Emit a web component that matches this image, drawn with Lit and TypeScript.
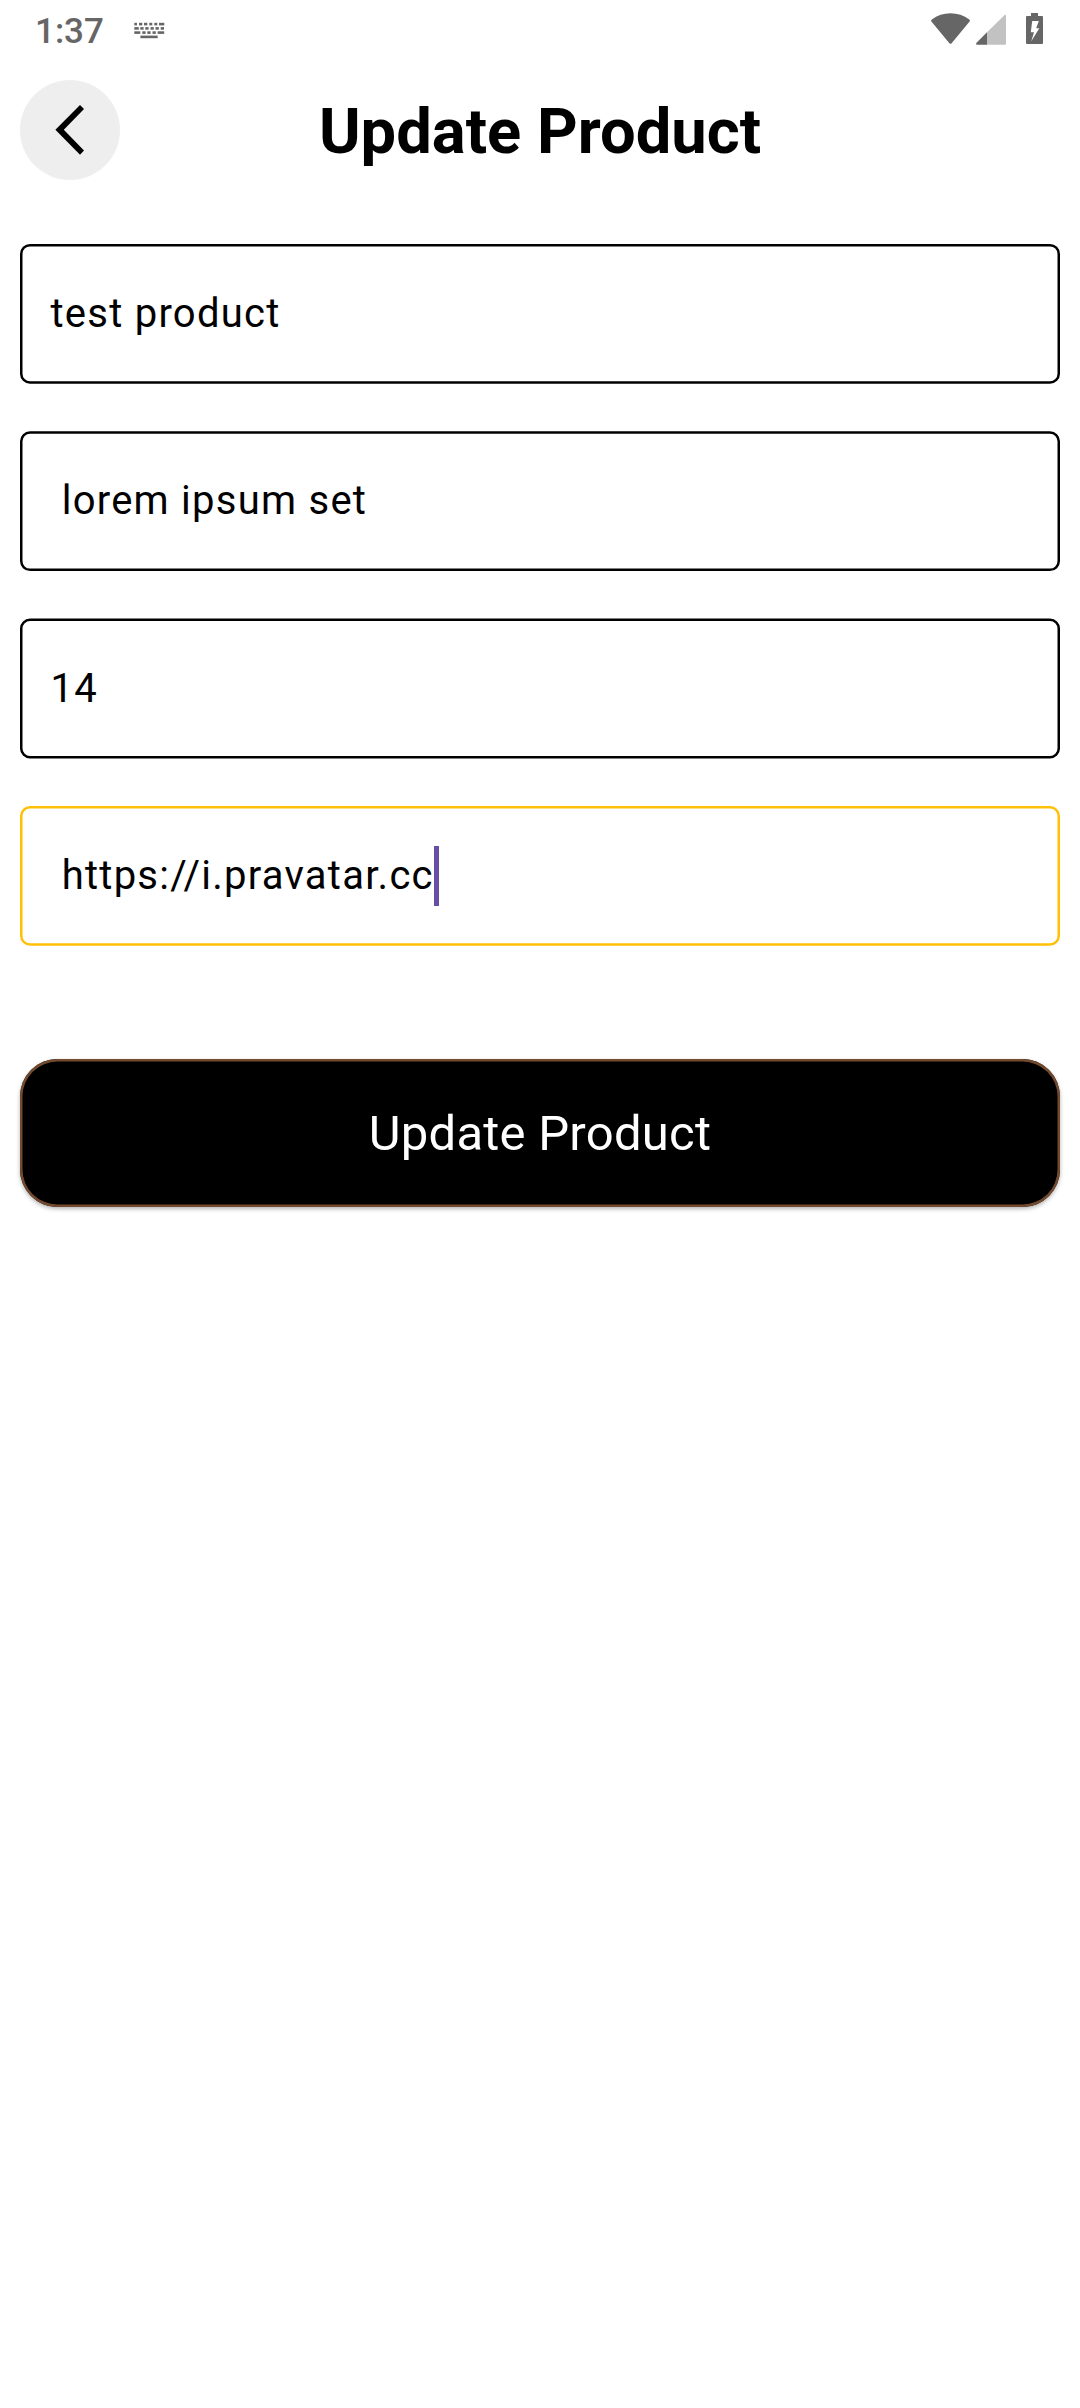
import { LitElement, html, css, svg } from "lit";
import { customElement, property } from "lit/decorators.js";

@customElement("status-bar")
class StatusBar extends LitElement {
  static styles = css`
    :host { display: flex; height: 60px; box-sizing: border-box; justify-content: space-between; color: #666; }
    .left { display: flex; padding-left: 35px; }
    .time { font: 500 35px/60px Roboto, sans-serif; width: 97px; padding-top: 2px; box-sizing: border-box; }
    svg { display: block; fill: currentColor; }
  `;
  render() {
    const keys = [
      [134.3, 22.8, 2.7], [139, 22.8, 3.3], [144, 22.8, 3.3], [149.3, 22.8, 3], [154.3, 22.8, 3], [159, 22.8, 5.3],
      [134.3, 27.1, 4.5], [140.3, 27.1, 3.3], [145.3, 27.1, 3.3], [150.5, 27.1, 3.3], [155.5, 27.1, 3.3], [160.7, 27.1, 3.3],
      [134.3, 31.3, 6], [142.3, 31.3, 3.3], [147.3, 31.3, 3.3], [152.5, 31.3, 3.3], [157.6, 31.3, 6.6],
      [140.4, 35.6, 17.3],
    ];
    return html`
      <div class="left">
        <span class="time">1:37</span>
        <svg width="36" height="60" viewBox="132 0 36 60">
          ${keys.map(([x, y, w]) => svg`<rect x=${x} y=${y} width=${w} height="2.6"/>`)}
        </svg>
      </div>
      <svg width="160" height="60" viewBox="920 0 160 60">
        <path d="M931.2 21.2Q930.8 20.2 931.8 19.5Q940 13.2 950.5 13.2Q961 13.2 969.3 19.5Q970.2 20.2 969.8 21.2L951.4 43.4Q950.5 44.3 949.6 43.4Z"/>
        <path fill="#c2c2c2" d="M987 32.2L1004.6 14.9Q1006 14.2 1006 15.8V43.7Q1006 44.8 1005 44.8H987Z"/>
        <path d="M987 32.2V44.8H977Q975.3 44.4 976.3 43Z"/>
        <path fill-rule="evenodd" d="M1031 13H1038V16H1042Q1043 16 1043 17V43Q1043 44 1042 44H1027Q1026 44 1026 43V17Q1026 16 1027 16H1031ZM1032.2 21L1030.8 32.3H1034L1031.3 41.3L1039.3 28.2H1036.2L1038.8 21Z"/>
      </svg>`;
  }
}

@customElement("text-field")
class TextField extends LitElement {
  @property() value = "";
  @property({ type: Boolean }) focused = false;
  @property({ type: Number }) nudge = 0;
  static styles = css`
    :host { display: block; position: relative; height: 139.85px; }
    .frame { position: absolute; left: 0; top: 0; display: block; overflow: visible; fill: none; stroke: #000; stroke-width: 2.5; }
    .frame.focused { stroke: #ffc107; }
    .content { display: flex; align-items: center; height: 140.15px; padding-left: 30.5px; }
    .value { font: 400 40px/60px Roboto, sans-serif; letter-spacing: 1.25px; white-space: pre; color: #000; }
    .caret { width: 5px; height: 60px; background: #6750a4; }
  `;
  render() {
    return html`
      <svg class="frame ${this.focused ? "focused" : ""}" width="1040" height="140">
        <rect x="1.25" y=${1.25 + this.nudge} width="1037.5" height="137.35" rx="8.75"/>
      </svg>
      <div class="content">
        <span class="value">${this.value}</span>
        ${this.focused ? html`<span class="caret"></span>` : null}
      </div>`;
  }
}

@customElement("app-root")
class AppRoot extends LitElement {
  static styles = css`
    :host { display: block; min-height: 2408px; background: #fff; font-family: Roboto, sans-serif; }
    .header { display: grid; grid-template-columns: 100px 1fr 100px; align-items: center; padding: 20px 20px 0; height: 100px; }
    .back { display: block; width: 100px; height: 100px; padding: 0; border: 0; border-radius: 50%; background: #eee; }
    .back svg { display: block; }
    .title { margin: 0; padding-top: 2px; text-align: center; font-size: 63.27px; line-height: 72px; font-weight: 700; color: #000; }
    .form { display: flex; flex-direction: column; gap: 47.5px; padding: 63.9px 20px 0; }
    .submit { display: block; box-sizing: border-box; width: 1040px; height: 148px; margin: 112.9px 20px 0; padding: 3px 0 0;
      border: 0; border-radius: 37.5px; background: #000; color: #fff; font: 400 49px/56px Roboto, sans-serif;
      box-shadow: inset 0 0 0 2.5px #734a2d, 0 2px 4px rgba(0,0,0,.3); letter-spacing: .25px; }
  `;
  private fields = [
    { value: "test product", nudge: -0.1 },
    { value: " lorem ipsum set", nudge: 0.25 },
    { value: "14", nudge: -0.4 },
    { value: " https://i.pravatar.cc", nudge: -0.05, focused: true },
  ];
  render() {
    return html`
      <status-bar></status-bar>
      <div class="header">
        <button class="back" aria-label="Back">
          <svg width="100" height="100"><path d="M60 25L64 29L43.8 49.8L64 70.6L60 74.8L35.4 49.8Z"/></svg>
        </button>
        <h1 class="title">Update Product</h1>
      </div>
      <div class="form">
        ${this.fields.map((f) => html`<text-field .value=${f.value} .nudge=${f.nudge} .focused=${!!f.focused}></text-field>`)}
      </div>
      <button class="submit">Update Product</button>`;
  }
}
